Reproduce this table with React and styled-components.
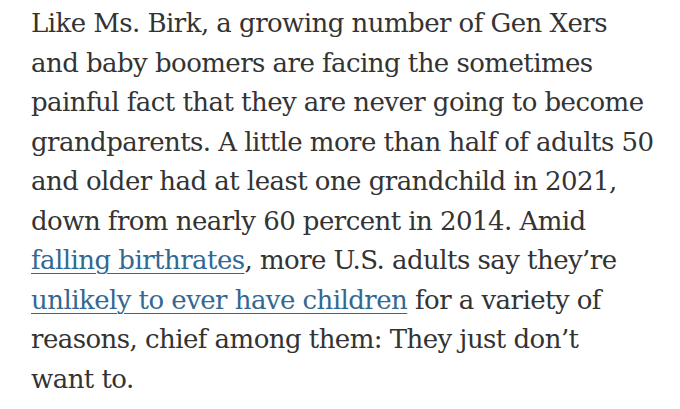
import React from 'react'
import styled, { createGlobalStyle } from 'styled-components'

const GlobalStyle = createGlobalStyle`
  html, body {
    margin: 0;
    padding: 0;
    background: #fff;
  }
`

const Article = styled.article`
  padding: 4px 0 0 31px;
  width: 680px;
  box-sizing: border-box;
`

const Paragraph = styled.p`
  margin: 0;
  font-family: "DejaVu Serif", "Liberation Serif", serif;
  font-size: 26px;
  letter-spacing: -0.55px;
  line-height: 39.5px;
  color: #333;
  white-space: nowrap;
`

const Link = styled.a`
  color: #326891;
  text-decoration: underline;
  text-decoration-thickness: 1px;
  text-underline-offset: 4px;
`

export default function App () {
  return (
    <Article>
      <GlobalStyle />
      <Paragraph>
        Like Ms. Birk, a growing number of Gen Xers<br />
        and baby boomers are facing the sometimes<br />
        painful fact that they are never going to become<br />
        grandparents. A little more than half of adults 50<br />
        and older had at least one grandchild in 2021,<br />
        down from nearly 60 percent in 2014. Amid<br />
        <Link href="#">falling birthrates</Link>, more U.S. adults say they’re<br />
        <Link href="#">unlikely to ever have children</Link> for a variety of<br />
        reasons, chief among them: They just don’t<br />
        want to.
      </Paragraph>
    </Article>
  )
}
